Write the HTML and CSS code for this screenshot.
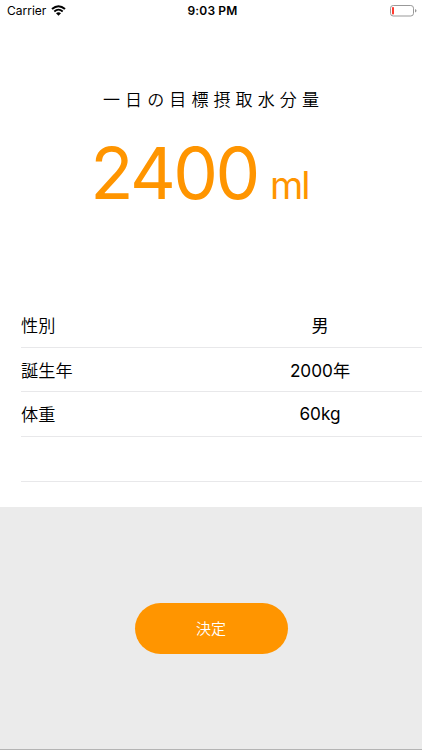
FILE: index.html
```html
<!DOCTYPE html>
<html lang="ja">
<head>
  <meta charset="UTF-8">
  <meta name="viewport" content="width=device-width, initial-scale=1.0">
  <title>一日の目標摂取水分量</title>
  <link rel="stylesheet" href="styles.css">
</head>
<body>
  <header class="status-bar">
    <div class="carrier">
      <span>Carrier</span>
      <svg width="15" height="11" viewBox="0 0 15 11">
        <path d="M1 4.1 Q7.5 -1.7 14 4.1" fill="none" stroke="#000" stroke-width="2"/>
        <path d="M3.3 6.5 Q7.5 2.7 11.7 6.5" fill="none" stroke="#000" stroke-width="1.8"/>
        <path d="M5 8.3 Q7.5 6.2 10 8.3 L7.5 10.8 Z"/>
      </svg>
    </div>
    <div class="time">9:03 PM</div>
    <div class="battery">
      <svg width="27" height="12" viewBox="0 0 27 12">
        <rect x="0.5" y="0.5" width="23" height="10.5" rx="2.7" fill="none" stroke="#999"/>
        <rect x="2" y="2" width="2" height="7.5" rx="0.8" fill="#ff3b30"/>
        <path d="M25 4 Q26.5 4.5 26.5 5.8 Q26.5 7 25 7.6 Z" fill="#999"/>
      </svg>
    </div>
  </header>

  <main>
    <section class="goal">
      <h1>一日の目標摂取水分量</h1>
      <p class="amount"><span class="number">2400</span><span class="unit">ml</span></p>
    </section>

    <ul class="profile">
      <li><span class="label">性別</span><span class="value">男</span></li>
      <li><span class="label">誕生年</span><span class="value">2000年</span></li>
      <li><span class="label">体重</span><span class="value">60kg</span></li>
      <li></li>
    </ul>
  </main>

  <footer>
    <button type="button">決定</button>
  </footer>
</body>
</html>
```

FILE: styles.css
```css
* {
  box-sizing: border-box;
}

body {
  margin: 0;
  height: 750px;
  display: flex;
  flex-direction: column;
  overflow: hidden;
  background-color: #fff;
  color: #000;
  font-family: Inter, "Noto Sans CJK JP", sans-serif;
}

.status-bar {
  display: grid;
  grid-template-columns: 1fr auto 1fr;
  align-items: center;
  height: 22px;
  padding: 0 5px 1px 7px;
  font-size: 12px;
}

.carrier {
  display: flex;
  align-items: center;
  gap: 5px;
}

.time {
  padding-left: 1px;
  font-weight: 600;
  letter-spacing: 0.15px;
}

.battery {
  display: flex;
  justify-content: flex-end;
}

main {
  height: 485px;
}

.goal {
  height: 281px;
  padding-top: 65px;
  text-align: center;
}

h1 {
  margin: 0;
  padding-left: 5px;
  font-size: 17px;
  font-weight: 350;
  line-height: 26px;
  letter-spacing: 5.1px;
}

.amount {
  display: flex;
  justify-content: center;
  align-items: baseline;
  gap: 12px;
  margin: 15px 0 0;
  padding-right: 23px;
  color: #ff9500;
  line-height: 90px;
}

.number {
  font-size: 71px;
  letter-spacing: -2.5px;
}

.unit {
  font-size: 38px;
  letter-spacing: -1.8px;
}

.profile {
  margin: 0;
  padding: 0 0 0 21px;
  list-style: none;
}

.profile li {
  display: flex;
  align-items: center;
  height: 44.7px;
  padding-bottom: 1px;
  border-bottom: 1px solid #e8e8ea;
  font-size: 17.2px;
}

.label {
  width: 197px;
  font-weight: 350;
}

.value {
  flex: 1;
  text-align: center;
}

footer {
  flex: 1;
  padding-top: 96px;
  background-color: #ebebeb;
  border-bottom: 1px solid #b4b4b4;
  text-align: center;
}

button {
  width: 153px;
  height: 51px;
  padding: 0 6px 2px;
  border: none;
  border-radius: 26px;
  background-color: #ff9500;
  color: #fff;
  font-family: inherit;
  font-size: 15px;
  font-weight: 350;
}
```
